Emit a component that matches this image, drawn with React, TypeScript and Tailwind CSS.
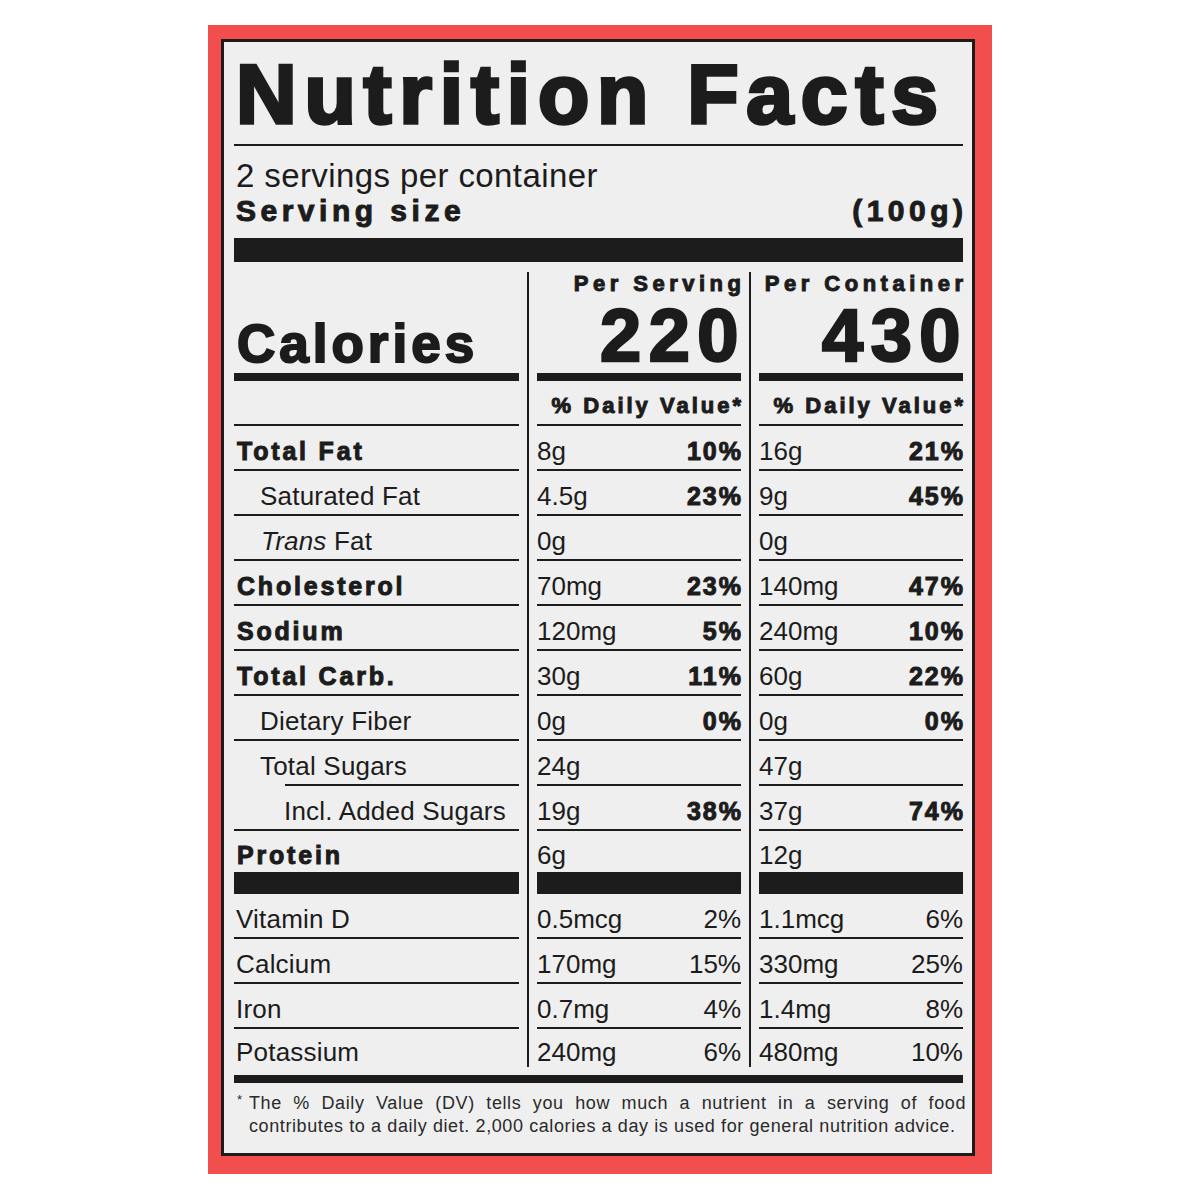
import type { ReactNode } from 'react'

const heavy = 'font-bold [-webkit-text-stroke:1px_#1c1c1c]'

type Nutrient = {
  label: ReactNode
  labelClass: string
  serving: string
  servingDv?: string
  container: string
  containerDv?: string
  dvHeavy?: boolean
  h: string
  line?: boolean
  lineClass?: string
}

const boldLabel = `${heavy} pl-[3px] text-[25px] tracking-[2.8px]`
const plainLabel = 'text-[26px] tracking-[0.2px]'

const nutrients: Nutrient[] = [
  { label: 'Total Fat', labelClass: boldLabel, serving: '8g', servingDv: '10%', container: '16g', containerDv: '21%', dvHeavy: true, h: 'h-[45px]' },
  { label: 'Saturated Fat', labelClass: `${plainLabel} pl-[26px]`, serving: '4.5g', servingDv: '23%', container: '9g', containerDv: '45%', dvHeavy: true, h: 'h-[45px]' },
  { label: <><i>Trans</i> Fat</>, labelClass: `${plainLabel} pl-[27px]`, serving: '0g', container: '0g', h: 'h-[45px]' },
  { label: 'Cholesterol', labelClass: boldLabel, serving: '70mg', servingDv: '23%', container: '140mg', containerDv: '47%', dvHeavy: true, h: 'h-[45px]' },
  { label: 'Sodium', labelClass: boldLabel, serving: '120mg', servingDv: '5%', container: '240mg', containerDv: '10%', dvHeavy: true, h: 'h-[45px]' },
  { label: 'Total Carb.', labelClass: boldLabel, serving: '30g', servingDv: '11%', container: '60g', containerDv: '22%', dvHeavy: true, h: 'h-[45px]' },
  { label: 'Dietary Fiber', labelClass: `${plainLabel} pl-[26px]`, serving: '0g', servingDv: '0%', container: '0g', containerDv: '0%', dvHeavy: true, h: 'h-[45px]' },
  { label: 'Total Sugars', labelClass: `${plainLabel} pl-[26px]`, serving: '24g', container: '47g', h: 'h-[45px]', lineClass: 'ml-[51px]' },
  { label: 'Incl. Added Sugars', labelClass: `${plainLabel} pl-[50px]`, serving: '19g', servingDv: '38%', container: '37g', containerDv: '74%', dvHeavy: true, h: 'h-[45px]' },
  { label: 'Protein', labelClass: boldLabel, serving: '6g', container: '12g', h: 'h-[41px]', line: false },
]

const minerals: Nutrient[] = [
  { label: 'Vitamin D', labelClass: `${plainLabel} pl-[2px]`, serving: '0.5mcg', servingDv: '2%', container: '1.1mcg', containerDv: '6%', h: 'h-[45px]' },
  { label: 'Calcium', labelClass: `${plainLabel} pl-[2px]`, serving: '170mg', servingDv: '15%', container: '330mg', containerDv: '25%', h: 'h-[45px]' },
  { label: 'Iron', labelClass: `${plainLabel} pl-[2px]`, serving: '0.7mg', servingDv: '4%', container: '1.4mg', containerDv: '8%', h: 'h-[45px]' },
  { label: 'Potassium', labelClass: `${plainLabel} pl-[2px]`, serving: '240mg', servingDv: '6%', container: '480mg', containerDv: '10%', h: 'h-[38px]', line: false },
]

function Divider() {
  return <div className="mx-2 w-[2px] shrink-0 self-stretch bg-[#1c1c1c]" />
}

function Col({ w, line = true, lineClass = '', children }: { w: string; line?: boolean; lineClass?: string; children?: ReactNode }) {
  return (
    <div className={`flex ${w} shrink-0 flex-col`}>
      <div className="flex flex-1 items-center justify-between whitespace-nowrap pt-[7px] leading-none">{children}</div>
      {line && <div className={`h-[2px] bg-[#1c1c1c] ${lineClass}`} />}
    </div>
  )
}

function NutrientRow({ n }: { n: Nutrient }) {
  const pct = n.dvHeavy ? `${heavy} -mr-[2px] text-[25px] tracking-[2px]` : 'text-[26px]'
  const line = n.line !== false
  return (
    <div className={`flex ${n.h}`}>
      <Col w="w-[285px]" line={line} lineClass={n.lineClass}>
        <span className={n.labelClass}>{n.label}</span>
      </Col>
      <Divider />
      <Col w="w-[204px]" line={line}>
        <span className="text-[26px]">{n.serving}</span>
        {n.servingDv && <span className={pct}>{n.servingDv}</span>}
      </Col>
      <Divider />
      <Col w="w-[204px]" line={line}>
        <span className="text-[26px]">{n.container}</span>
        {n.containerDv && <span className={pct}>{n.containerDv}</span>}
      </Col>
    </div>
  )
}

function Amount({ title, value }: { title: string; value: string }) {
  return (
    <div className="flex w-[204px] shrink-0 flex-col items-end">
      <div className={`${heavy} -mr-[4.5px] mt-[2px] text-[22px] leading-[20px] tracking-[4.5px]`}>{title}</div>
      <div className="-mr-[5px] mt-[7px] text-[74px] font-bold leading-[70px] tracking-[7.5px] [-webkit-text-stroke:2.5px_#1c1c1c]">{value}</div>
      <div className="mt-[2px] h-[8px] w-full bg-[#1c1c1c]" />
    </div>
  )
}

export default function App() {
  return (
    <div className="flex min-h-[1200px] justify-center bg-white pt-[25px] font-['Liberation_Sans',Arial,sans-serif] text-[#1c1c1c]">
      <div className="h-fit w-[784px] bg-[#f24e4e] pb-[18px] pl-[13px] pr-[17px] pt-[14px]">
        <div className="border-[3px] border-[#1c1c1c] bg-[#efefef] pb-[15px] pl-[10px] pr-[9px] pt-[10px]">
          <h1 className="whitespace-nowrap pl-[2px] text-[84px] font-bold leading-[84px] tracking-[7.8px] [-webkit-text-stroke:3.5px_#1c1c1c]">
            Nutrition Facts
          </h1>
          <div className="mt-[8px] h-[2px] bg-[#1c1c1c]" />
          <div className="mt-[15px] pl-[2px] text-[33px] leading-[30px] tracking-[0.4px]">2 servings per container</div>
          <div className={`mt-[7px] flex justify-between pl-[2px] text-[30px] leading-[26px] ${heavy} [-webkit-text-stroke:1.5px_#1c1c1c]`}>
            <span className="tracking-[4.5px]">Serving size</span>
            <span className="-mr-[4.5px] tracking-[4.5px]">(100g)</span>
          </div>
          <div className="mt-[14px] h-[24px] bg-[#1c1c1c]" />

          <div className="mt-[10px]">
            {/* Calories header */}
            <div className="flex h-[109px]">
              <div className="flex w-[285px] shrink-0 flex-col justify-end">
                <div className="mb-[3px] pl-[3px] text-[53px] font-bold leading-[52px] tracking-[4px] [-webkit-text-stroke:2px_#1c1c1c]">Calories</div>
                <div className="h-[8px] bg-[#1c1c1c]" />
              </div>
              <Divider />
              <Amount title="Per Serving" value="220" />
              <Divider />
              <Amount title="Per Container" value="430" />
            </div>

            {/* DV header */}
            <div className="flex h-[45px]">
              <Col w="w-[285px]" />
              <Divider />
              <Col w="w-[204px]">
                <span className={`${heavy} -mr-[3px] ml-auto text-[22px] tracking-[3px]`}>% Daily Value*</span>
              </Col>
              <Divider />
              <Col w="w-[204px]">
                <span className={`${heavy} -mr-[3px] ml-auto text-[22px] tracking-[3px]`}>% Daily Value*</span>
              </Col>
            </div>

            {nutrients.map((n, i) => (
              <NutrientRow key={i} n={n} />
            ))}

            <div className="flex h-[22px]">
              <div className="w-[285px] shrink-0 bg-[#1c1c1c]" />
              <Divider />
              <div className="w-[204px] shrink-0 bg-[#1c1c1c]" />
              <Divider />
              <div className="w-[204px] shrink-0 bg-[#1c1c1c]" />
            </div>

            {minerals.map((n, i) => (
              <NutrientRow key={i} n={n} />
            ))}
          </div>

          <div className="mt-[8px] h-[8px] bg-[#1c1c1c]" />

          <div className="mt-[9px] text-[18px] leading-[23px] tracking-[0.6px] text-[#2a2a2a]">
            <div className="-mr-[3px] flex pl-[3px]">
              <span className="w-[12px] shrink-0 text-[13px] leading-[16px]">*</span>
              <span className="flex-1 text-justify [text-align-last:justify]">
                The % Daily Value (DV) tells you how much a nutrient in a serving of food
              </span>
            </div>
            <div className="whitespace-nowrap pl-[15px]">
              contributes to a daily diet. 2,000 calories a day is used for general nutrition advice.
            </div>
          </div>
        </div>
      </div>
    </div>
  )
}
